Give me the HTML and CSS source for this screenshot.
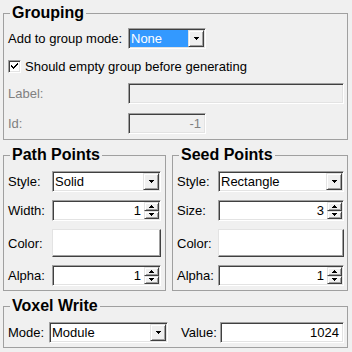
FILE: index.html
```html
<!DOCTYPE html>
<html lang="en">
<head>
    <meta charset="UTF-8">
    <title>Point Settings</title>
    <link rel="stylesheet" href="styles.css">
</head>
<body>
    <fieldset class="group group-grouping">
        <legend>Grouping</legend>
        <div class="form form-grouping">
            <span class="lbl">Add to group mode:</span>
            <div class="sunken combo combo-short combo-focus">
                <span class="combo-text">None</span>
                <span class="btn combo-btn"><svg width="7" height="4" viewBox="0 0 7 4"><path d="M1 0h5v1H1zM2 1h3v1H2zM3 2h1v1H3z"/></svg></span>
            </div>
            <label class="check-row">
                <span class="check"><svg width="9" height="9" viewBox="0 0 9 9"><path d="M1 3h1v1h1v1h1V4h1V3h1V2h1V1h1v2H7v1H6v1H5v1H4v1H3V6H2V5H1z"/></svg></span>
                <span>Should empty group before generating</span>
            </label>
            <span class="lbl lbl-disabled">Label:</span>
            <div class="sunken field field-disabled"></div>
            <span class="lbl lbl-disabled">Id:</span>
            <div class="sunken field field-disabled field-short">-1</div>
        </div>
    </fieldset>

    <div class="columns">
        <fieldset class="group group-path">
            <legend>Path Points</legend>
            <div class="form form-path">
                <span class="lbl">Style:</span>
                <div class="sunken combo">
                    <span class="combo-text">Solid</span>
                    <span class="btn combo-btn"><svg width="7" height="4" viewBox="0 0 7 4"><path d="M1 0h5v1H1zM2 1h3v1H2zM3 2h1v1H3z"/></svg></span>
                </div>
                <span class="lbl">Width:</span>
                <div class="sunken spin">
                    <span class="spin-val">1</span>
                    <span class="spin-btns">
                        <span class="btn spin-btn"><svg width="7" height="3" viewBox="0 0 7 3"><path d="M3 0h1v1H3zM2 1h3v1H2zM1 2h5v1H1z"/></svg></span>
                        <span class="btn spin-btn"><svg width="7" height="3" viewBox="0 0 7 3"><path d="M1 0h5v1H1zM2 1h3v1H2zM3 2h1v1H3z"/></svg></span>
                    </span>
                </div>
                <span class="lbl">Color:</span>
                <div class="color-box"></div>
                <span class="lbl">Alpha:</span>
                <div class="sunken spin">
                    <span class="spin-val">1</span>
                    <span class="spin-btns">
                        <span class="btn spin-btn"><svg width="7" height="3" viewBox="0 0 7 3"><path d="M3 0h1v1H3zM2 1h3v1H2zM1 2h5v1H1z"/></svg></span>
                        <span class="btn spin-btn"><svg width="7" height="3" viewBox="0 0 7 3"><path d="M1 0h5v1H1zM2 1h3v1H2zM3 2h1v1H3z"/></svg></span>
                    </span>
                </div>
            </div>
        </fieldset>

        <fieldset class="group group-seed">
            <legend>Seed Points</legend>
            <div class="form form-seed">
                <span class="lbl">Style:</span>
                <div class="sunken combo">
                    <span class="combo-text">Rectangle</span>
                    <span class="btn combo-btn"><svg width="7" height="4" viewBox="0 0 7 4"><path d="M1 0h5v1H1zM2 1h3v1H2zM3 2h1v1H3z"/></svg></span>
                </div>
                <span class="lbl">Size:</span>
                <div class="sunken spin">
                    <span class="spin-val">3</span>
                    <span class="spin-btns">
                        <span class="btn spin-btn"><svg width="7" height="3" viewBox="0 0 7 3"><path d="M3 0h1v1H3zM2 1h3v1H2zM1 2h5v1H1z"/></svg></span>
                        <span class="btn spin-btn"><svg width="7" height="3" viewBox="0 0 7 3"><path d="M1 0h5v1H1zM2 1h3v1H2zM3 2h1v1H3z"/></svg></span>
                    </span>
                </div>
                <span class="lbl">Color:</span>
                <div class="color-box"></div>
                <span class="lbl">Alpha:</span>
                <div class="sunken spin">
                    <span class="spin-val">1</span>
                    <span class="spin-btns">
                        <span class="btn spin-btn"><svg width="7" height="3" viewBox="0 0 7 3"><path d="M3 0h1v1H3zM2 1h3v1H2zM1 2h5v1H1z"/></svg></span>
                        <span class="btn spin-btn"><svg width="7" height="3" viewBox="0 0 7 3"><path d="M1 0h5v1H1zM2 1h3v1H2zM3 2h1v1H3z"/></svg></span>
                    </span>
                </div>
            </div>
        </fieldset>
    </div>

    <fieldset class="group group-voxel">
        <legend>Voxel Write</legend>
        <div class="voxel-row">
            <span class="lbl lbl-mode">Mode:</span>
            <div class="sunken combo combo-mode">
                <span class="combo-text">Module</span>
                <span class="btn combo-btn"><svg width="7" height="4" viewBox="0 0 7 4"><path d="M1 0h5v1H1zM2 1h3v1H2zM3 2h1v1H3z"/></svg></span>
            </div>
            <span class="lbl lbl-value">Value:</span>
            <div class="sunken field field-value">1024</div>
        </div>
    </fieldset>
</body>
</html>
```

FILE: styles.css
```css
body {
    margin: 0;
    padding: 0 4px 0 3px;
    background-color: #f0f0f0;
    font-family: "Liberation Sans", Arial, sans-serif;
    font-size: 13px;
    color: #000;
}
.group {
    margin: 0;
    padding: 6px 3px 5px 4px;
    border: 1px solid #a0a0a0;
    min-width: 0;
}
.group-grouping {
    margin-top: 4px;
}
.group legend {
    margin-left: 2px;
    padding: 0 2px;
    font-size: 16px;
    font-weight: bold;
    line-height: 18px;
}
.columns {
    display: flex;
    gap: 6px;
    margin-top: 6px;
}
.group-path {
    width: 163px;
    box-sizing: border-box;
    padding: 7px 4px 4px 4px;
}
.group-seed {
    flex: 1;
    padding: 7px 3px 4px 4px;
}
.group-voxel {
    margin-top: 6px;
    padding: 7px 3px 4px 4px;
}
.form {
    display: grid;
    align-items: center;
    row-gap: 9px;
}
.form-grouping {
    grid-template-columns: 120px 1fr;
}
.form-path {
    grid-template-columns: 44px 1fr;
    row-gap: 8px;
}
.form-seed {
    grid-template-columns: 41px 1fr;
    row-gap: 8px;
}
.lbl {
    white-space: nowrap;
}
.lbl-disabled {
    color: #808080;
}
/* sunken edit frame, windows classic look */
.sunken {
    box-sizing: border-box;
    height: 21px;
    padding: 1px;
    border: 1px solid;
    border-color: #a0a0a0 #fff #fff #a0a0a0;
    box-shadow: inset 1px 1px 0 #404040, inset -1px -1px 0 #e3e3e3;
    background-color: #fff;
}
.btn {
    box-sizing: border-box;
    display: flex;
    align-items: center;
    justify-content: center;
    background-color: #f0f0f0;
    border: 1px solid;
    border-color: #e3e3e3 #404040 #404040 #e3e3e3;
    box-shadow: inset 1px 1px 0 #fff, inset -1px -1px 0 #a0a0a0;
}
.combo {
    display: flex;
}
.combo-text {
    flex: 1;
    padding-left: 1px;
    line-height: 17px;
}
.combo-btn {
    width: 16px;
}
.combo-short {
    width: 78px;
}
.combo-focus .combo-text {
    background-color: #3399ff;
    color: #fff;
}
.combo-mode {
    width: 119px;
}
.check-row {
    grid-column: 1 / -1;
    display: flex;
    align-items: center;
    gap: 4px;
    height: 16px;
}
.check {
    box-sizing: border-box;
    width: 13px;
    height: 13px;
    display: flex;
    align-items: center;
    justify-content: center;
    border: 1px solid;
    border-color: #a0a0a0 #fff #fff #a0a0a0;
    box-shadow: inset 1px 1px 0 #404040, inset -1px -1px 0 #e3e3e3;
    background-color: #fff;
}
.field {
    text-align: right;
    padding-right: 4px;
    line-height: 17px;
}
.field-disabled {
    background-color: #f0f0f0;
    color: #808080;
}
.field-short {
    width: 78px;
}
.spin {
    display: flex;
}
.spin-val {
    flex: 1;
    text-align: right;
    padding-right: 3px;
    line-height: 17px;
}
.spin-btns {
    width: 15px;
    display: flex;
    flex-direction: column;
}
.spin-btn {
    flex: 1;
}
.color-box {
    box-sizing: border-box;
    height: 28px;
    background-color: #fff;
    border: 1px solid;
    border-color: #e3e3e3 #404040 #404040 #e3e3e3;
    box-shadow: inset -1px -1px 0 #a0a0a0;
}
.voxel-row {
    display: flex;
    align-items: center;
}
.lbl-mode {
    width: 41px;
}
.lbl-value {
    width: 39px;
    margin-left: 13px;
}
.field-value {
    flex: 1;
    color: #000;
}
```
